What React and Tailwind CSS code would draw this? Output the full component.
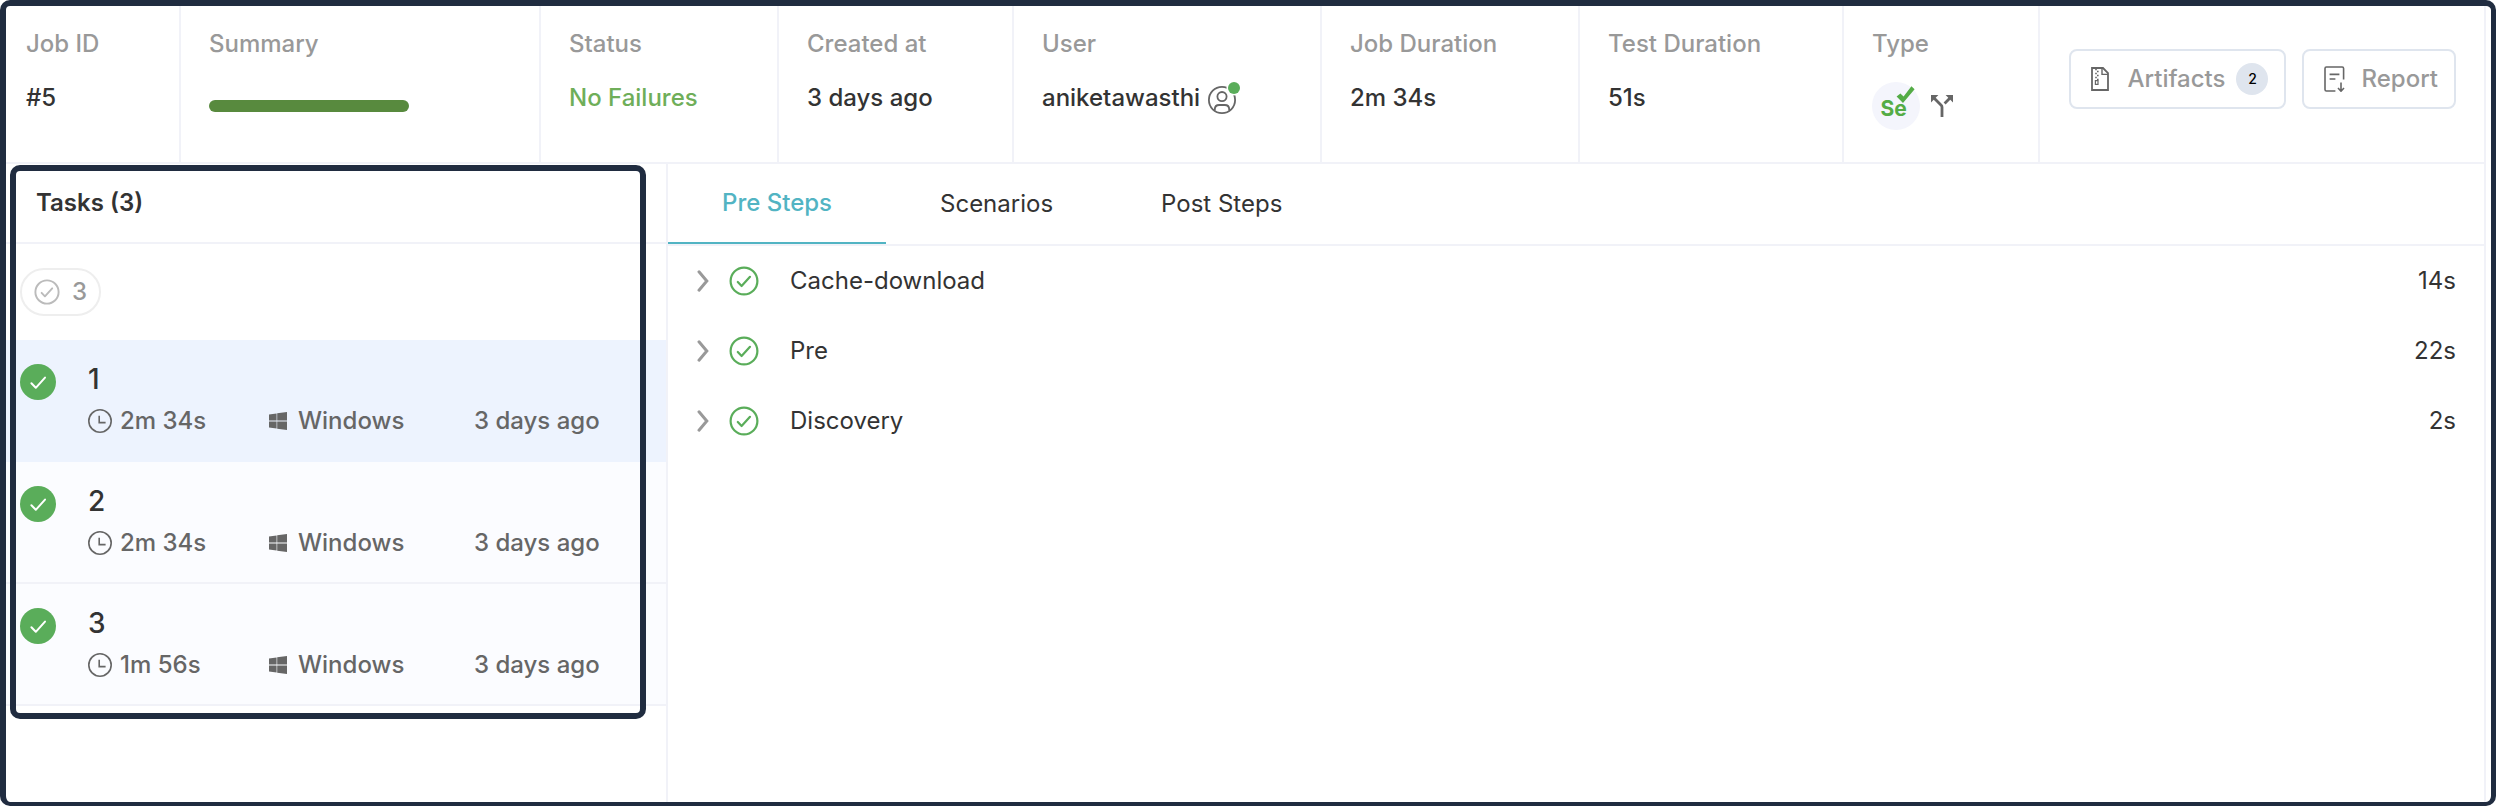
import React from "react";

const heading = "text-2xl leading-8 font-medium";

function RingCheck({ className }) {
  return (
    <svg viewBox="0 0 30 30" fill="none" stroke="currentColor" strokeWidth="2.2" className={className} aria-hidden="true">
      <circle cx="15" cy="15" r="13.4" />
      <path d="M8.8 16 L12.6 20 L21 10.8" strokeLinecap="round" strokeLinejoin="round" />
    </svg>
  );
}

function Passed() {
  return (
    <svg viewBox="0 0 36 36" className="mt-6 size-9 shrink-0" role="img" aria-label="Passed">
      <circle cx="18" cy="18" r="18" fill="#5aad5a" />
      <path d="M11.4 19.2 L15.8 23.8 L25 13.6" fill="none" stroke="#fff" strokeWidth="2" strokeLinecap="round" strokeLinejoin="round" />
    </svg>
  );
}

function Clock() {
  return (
    <svg viewBox="0 0 24 24" fill="none" stroke="currentColor" strokeWidth="1.6" className="size-6" aria-hidden="true">
      <circle cx="12" cy="12" r="11.2" />
      <path d="M11.2 6.8 V13.6 H17.6" />
    </svg>
  );
}

function WindowsLogo() {
  return (
    <svg viewBox="0 0 18 18" fill="currentColor" className="size-[18px]" aria-hidden="true">
      <path d="M0 2.5 L7.6 1.5 V8.6 H0 Z M8.2 1.3 L18 0 V8.6 H8.2 Z M0 9.4 H7.6 V16.5 L0 15.5 Z M8.2 9.4 H18 V18 L8.2 16.7 Z" />
    </svg>
  );
}

function UserIcon() {
  return (
    <svg viewBox="0 0 32 32" className="size-8" fill="none" stroke="#666" strokeWidth="1.8" aria-hidden="true">
      <circle cx="14" cy="18" r="13.1" />
      <circle cx="14" cy="14.6" r="4.6" />
      <path d="M6.8 28.6 V27.4 C6.8 24.6 8.6 23 11.2 23 H16.8 C19.4 23 21.2 24.6 21.2 27.4 V28.6" />
      <circle cx="26" cy="6" r="7.6" fill="#fff" stroke="none" />
      <circle cx="26" cy="6" r="6" fill="#5aad5a" stroke="none" />
    </svg>
  );
}

function SeleniumLogo() {
  return (
    <svg viewBox="0 0 48 48" className="size-12" role="img" aria-label="Selenium">
      <circle cx="24" cy="24" r="24" fill="#f4f5fc" />
      <text x="8.4" y="34" fontSize="21" fontWeight="700" fill="#54ac46" fontFamily="Inter, sans-serif">Se</text>
      <path d="M24.6 14.6 L28.4 11.6 L31.6 14.6 L39.4 4.2 L42.6 7.2 L31 21 Z" fill="#54ac46" />
    </svg>
  );
}

function SplitIcon() {
  return (
    <svg viewBox="0 0 22 22" className="size-[22px]" fill="none" stroke="#666" strokeWidth="2.8" aria-hidden="true">
      <path d="M11 22 V12.2 Q11 11 10.2 10.2 L3 3 M13.6 8.4 L19 3" />
      <path d="M0 0 H7.4 L0 7.4 Z M22 0 H14.6 L22 7.4 Z" fill="#666" stroke="none" />
    </svg>
  );
}

function ZipIcon() {
  return (
    <svg viewBox="0 0 18 24" className="h-6 w-[18px]" fill="none" stroke="#666" aria-hidden="true">
      <path d="M1 1 H12 L17 6 V23 H1 Z" strokeWidth="1.8" />
      <path d="M11 1 V7.4 H17" strokeWidth="1.4" />
      <path d="M4.2 2.5 H5.8 M6 4.5 H7.6 M4.2 6.5 H5.8 M6 8.5 H7.6 M4.2 10.5 H5.8 M6 12.5 H7.6" strokeWidth="1.4" />
      <path d="M4.4 13.6 H7 V17.4 H4.4 Z" strokeWidth="1.2" />
    </svg>
  );
}

function ReportIcon() {
  return (
    <svg viewBox="0 0 21 26" className="h-[26px] w-[21px]" fill="none" stroke="#666" strokeWidth="1.6" aria-hidden="true">
      <path d="M11.4 25 H2.4 Q1 25 1 23.6 V2.4 Q1 1 2.4 1 H18.2 Q19.6 1 19.6 2.4 V13.6" />
      <path d="M5.6 8.4 H15.4 M5.6 13 H11.4" />
      <path d="M17 16.4 V25 M14 22 L17 25.2 L20 22" />
    </svg>
  );
}

function Chevron() {
  return (
    <svg viewBox="0 0 12 22" className="h-[22px] w-3" fill="none" stroke="#999" strokeWidth="3" aria-hidden="true">
      <path d="M2 1.8 L9.8 11 L2 20.2" strokeLinecap="round" />
    </svg>
  );
}

function Field({ label, inset = "pl-7", children }) {
  return (
    <div className={`border-r-2 border-[#f1f2f8] pt-[22px] ${inset}`}>
      <dt className={`${heading} text-[#999]`}>{label}</dt>
      <dd className={`${heading} mt-[22px] text-[#333]`}>{children}</dd>
    </div>
  );
}

const tasks = [
  { id: "1", time: "2m 34s", tone: "border-[#edf3fe] bg-[#edf3fe]" },
  { id: "2", time: "2m 34s", tone: "border-[#f1f2f8] bg-[#fbfcff]" },
  { id: "3", time: "1m 56s", tone: "border-[#f1f2f8] bg-[#fbfcff]" },
];

const steps = [
  { name: "Cache-download", time: "14s" },
  { name: "Pre", time: "22s" },
  { name: "Discovery", time: "2s" },
];

export default function App() {
  return (
    <div className="min-h-screen bg-white font-['Inter',sans-serif]">
      <div className="flex min-h-screen flex-col rounded-[10px] border-t-[6px] border-r-[5px] border-b-4 border-l-[6px] border-[#202c40] bg-white pr-[5px]">
        <header className="flex h-[158px] border-r-2 border-b-2 border-[#f1f2f8]">
          <dl className="grid grow grid-cols-[175fr_360fr_238fr_235fr_308fr_258fr_264fr_196fr]">
            <Field label="Job ID" inset="pl-5">#5</Field>
            <Field label="Summary">
              <div className="mt-10 h-3 w-[200px] rounded-full bg-[#588a3e]" />
            </Field>
            <Field label="Status"><span className="text-[#6fae59]">No Failures</span></Field>
            <Field label="Created at">3 days ago</Field>
            <Field label="User">
              <span className="flex gap-2">aniketawasthi <UserIcon /></span>
            </Field>
            <Field label="Job Duration">2m 34s</Field>
            <Field label="Test Duration">51s</Field>
            <Field label="Type">
              <span className="flex items-center gap-[11px]"><SeleniumLogo /><SplitIcon /></span>
            </Field>
          </dl>
          <div className="flex w-[444px] shrink-0 justify-end gap-4 pt-[43px] pr-7">
            <button className={`${heading} flex h-15 items-center rounded-lg border-2 border-[#dfe5ee] pr-4 pl-5 text-[#999]`}>
              <ZipIcon />
              <span className="ml-[19px]">Artifacts</span>
              <span className="ml-[11px] flex size-8 items-center justify-center rounded-full bg-[#dfe5ee] text-sm text-black">2</span>
            </button>
            <button className={`${heading} flex h-15 items-center gap-4 rounded-lg border-2 border-[#dfe5ee] pr-4 pl-5 text-[#999]`}>
              <ReportIcon />
              Report
            </button>
          </div>
        </header>

        <div className="flex grow">
          <aside className="relative w-[662px] shrink-0 border-r-2 border-[#f1f2f8]">
            <h2 className="flex h-20 items-center border-b-2 border-[#f1f2f8] pl-[30px] text-2xl font-semibold text-[#333]">Tasks (3)</h2>
            <div className="flex h-24 items-center pl-3.5">
              <button className={`${heading} flex h-12 items-center gap-3 rounded-full border-2 border-[#eee] px-3 text-[#999]`}>
                <RingCheck className="size-[26px] text-[#bbb]" />3
              </button>
            </div>
            <ul>
              {tasks.map((t) => (
                <li key={t.id} className={`flex h-[122px] gap-8 border-b-2 pl-3.5 ${t.tone}`}>
                  <Passed />
                  <div className="grow pt-[21px]">
                    <h3 className="text-[28px] leading-9 font-medium text-[#333]">{t.id}</h3>
                    <div className={`${heading} mt-2 grid grid-cols-[181px_205px_1fr] items-center text-[#666]`}>
                      <span className="flex items-center gap-2"><Clock />{t.time}</span>
                      <span className="flex items-center gap-[11px]"><WindowsLogo />Windows</span>
                      <span>3 days ago</span>
                    </div>
                  </div>
                </li>
              ))}
            </ul>
            <div className="pointer-events-none absolute top-px left-1 h-[554px] w-[636px] rounded-[10px] border-6 border-[#202c40]" />
          </aside>

          <main className="grow border-r-2 border-[#f1f2f8]">
            <div role="tablist" className="flex h-[82px] border-b-2 border-[#f1f2f8] text-2xl text-[#333]">
              <button role="tab" aria-selected="true" className="h-20 border-b-2 border-[#52b4c3] px-[54px] font-medium text-[#52b4c3]">Pre Steps</button>
              <button role="tab" aria-selected="false" className="px-[54px]">Scenarios</button>
              <button role="tab" aria-selected="false" className="px-[54px]">Post Steps</button>
            </div>
            <ul className="text-2xl text-[#333]">
              {steps.map((s) => (
                <li key={s.name}>
                  <button className="flex h-[70px] w-full items-center pr-7 pl-[29px]">
                    <Chevron />
                    <RingCheck className="ml-5 size-[30px] text-[#5aad5a]" />
                    <span className="ml-[31px]">{s.name}</span>
                    <span className="ml-auto">{s.time}</span>
                  </button>
                </li>
              ))}
            </ul>
          </main>
        </div>
      </div>
    </div>
  );
}
